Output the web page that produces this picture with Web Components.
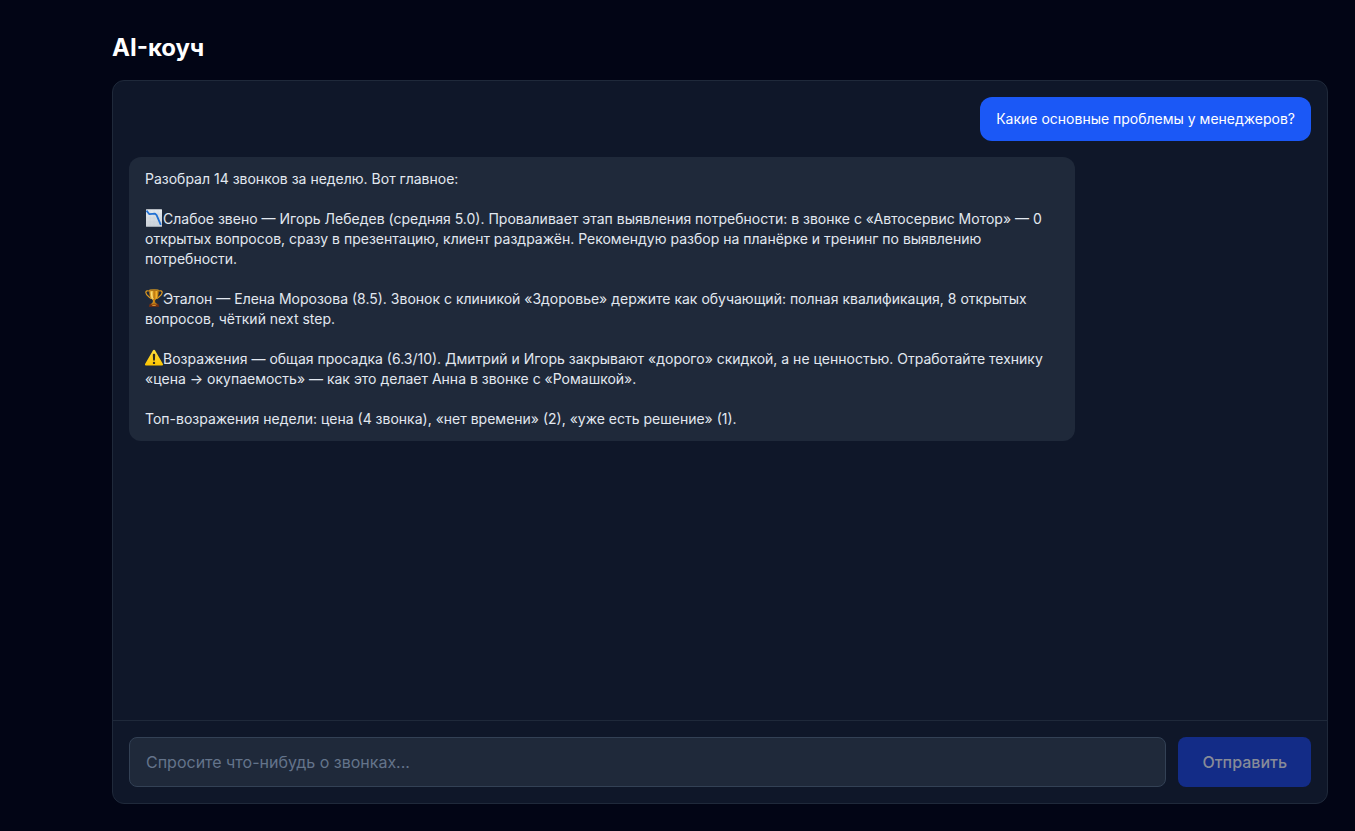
<!DOCTYPE html>
<html lang="ru">
<head>
<meta charset="utf-8">
<meta name="viewport" content="width=device-width, initial-scale=1">
<title>AI-коуч</title>
<style>
  body {
    margin: 0;
    background: #020515;
    color: #e2e8f0;
    font-family: Inter, "Noto Sans", sans-serif;
    -webkit-font-smoothing: antialiased;
  }
</style>
</head>
<body>
<coach-page>
  <span slot="title">AI-коуч</span>
  <coach-chat>
    <chat-message from="user">Какие основные проблемы у менеджеров?</chat-message>
    <chat-message from="coach"><p>Разобрал 14 звонков за неделю. Вот главное:</p>
      <p><chat-icon name="chart"></chat-icon>Слабое звено — Игорь Лебедев (средняя 5.0). Проваливает этап выявления потребности: в звонке с «Автосервис Мотор» — 0 открытых вопросов, сразу в презентацию, клиент раздражён. Рекомендую разбор на планёрке и тренинг по выявлению потребности.</p>
      <p><chat-icon name="trophy"></chat-icon>Эталон — Елена Морозова (8.5). Звонок с клиникой «Здоровье» держите как обучающий: полная квалификация, 8 открытых вопросов, чёткий next step.</p>
      <p><chat-icon name="warning"></chat-icon>Возражения — общая просадка (6.3/10). Дмитрий и Игорь закрывают «дорого» скидкой, а не ценностью. Отработайте технику «цена → окупаемость» — как это делает Анна в звонке с «Ромашкой».</p>
      <p>Топ-возражения недели: цена (4 звонка), «нет времени» (2), «уже есть решение» (1).</p></chat-message>
    <chat-composer slot="composer"></chat-composer>
  </coach-chat>
</coach-page>

<script>
const ICONS = {
  chart: `
    <defs>
      <linearGradient id="paper" x1="0" y1="0" x2="0" y2="1">
        <stop offset="0" stop-color="#e4e9ee"/>
        <stop offset="1" stop-color="#cbd1d8"/>
      </linearGradient>
    </defs>
    <rect x="1" y="0.3" width="16" height="17.4" rx="0.5" fill="url(#paper)"/>
    <path d="M1.5 5h15M1.5 9h15M1.5 13h15M5 1v16M9 1v16M13 1v16" stroke="#bcc7d1" stroke-width="0.4" opacity="0.6"/>
    <path d="M1.5 1.6 4.4 5.2 10 4.6 11.6 6.2 15.8 15.8" fill="none" stroke="#2170d2" stroke-width="1.8" stroke-linejoin="round"/>`,
  trophy: `
    <defs>
      <linearGradient id="gold" x1="0" y1="0" x2="1" y2="0">
        <stop offset="0" stop-color="#b8720a"/>
        <stop offset="0.3" stop-color="#ffd65a"/>
        <stop offset="0.5" stop-color="#b96f08"/>
        <stop offset="0.75" stop-color="#f3b32b"/>
        <stop offset="1" stop-color="#9b5905"/>
      </linearGradient>
    </defs>
    <path d="M4.6 2.2C2.7 1.2.8 2 .8 3.6c0 2.7 3 3.8 5.6 6.2M13.4 2.2c1.9-1 3.8-.2 3.8 1.4 0 2.7-3 3.8-5.6 6.2" fill="none" stroke="#dc9820" stroke-width="1.2"/>
    <path d="M4.1 1h9.8c.1 5.1-1.2 8.6-3.7 10.1-.4 1.2 0 2.7.9 3.8H6.9c.9-1.1 1.3-2.6.9-3.8C5.3 9.6 4 6.1 4.1 1z" fill="url(#gold)"/>
    <ellipse cx="9" cy="1.1" rx="4.9" ry="0.9" fill="#e4a82b"/>
    <ellipse cx="9" cy="1.2" rx="3.8" ry="0.4" fill="#7c4307"/>
    <path d="M6.2 3.2c.2 3 .8 5 1.9 6.4" fill="none" stroke="#ffe78a" stroke-width="0.8" stroke-linecap="round"/>
    <path d="M4.8 14.8h8.4l1 3H3.8z" fill="#762f10"/>
    <path d="M6.2 14.4h5.6l.5 1.2H5.7z" fill="#c17a13"/>
    <path d="M7.3 16h3.4v.9H7.3z" fill="#e1a032"/>`,
  warning: `
    <defs>
      <linearGradient id="sign" x1="0" y1="0" x2="0" y2="1">
        <stop offset="0" stop-color="#ffdf3f"/>
        <stop offset="1" stop-color="#fbc400"/>
      </linearGradient>
    </defs>
    <path d="M7.9 1.5c.5-.9 1.7-.9 2.2 0l7.7 13.2c.5.9 0 1.8-1 1.8H1.2c-1 0-1.5-.9-1-1.8z" fill="url(#sign)"/>
    <path d="M7.8 5.8c0-.7.5-1.1 1.2-1.1s1.2.4 1.2 1.1l-.3 5.2c0 .5-.4.8-.9.8s-.9-.3-.9-.8z" fill="#322b20"/>
    <circle cx="9" cy="13.9" r="1.2" fill="#322b20"/>`
};

class ChatIcon extends HTMLElement {
  constructor() {
    super();
    this.attachShadow({ mode: 'open' });
  }

  connectedCallback() {
    // 18px box hanging 3px below the baseline fills a 20px line without growing it
    this.shadowRoot.innerHTML = `
      <style>
        :host { display: inline-block; width: 18px; height: 18px; vertical-align: -3px; }
        svg { display: block; width: 100%; height: 100%; }
      </style>
      <svg viewBox="0 0 18 18" aria-hidden="true">${ICONS[this.getAttribute('name')] || ''}</svg>
    `;
  }
}

class ChatMessage extends HTMLElement {
  constructor() {
    super();
    this.attachShadow({ mode: 'open' }).innerHTML = `
      <style>
        :host {
          display: block;
          box-sizing: border-box;
          max-width: 80%;
          padding: 12px 16px;
          border-radius: 12px;
          font-size: 14px;
          line-height: 20px;
        }
        :host([from="user"]) { align-self: flex-end; background: #1b58f6; color: #fff; }
        :host([from="coach"]) { align-self: flex-start; background: #1f293a; color: #e2e8f0; }
        ::slotted(p) { margin: 0 0 20px; }
        ::slotted(p:last-child) { margin-bottom: 0; }
      </style>
      <slot></slot>
    `;
  }
}

class ChatComposer extends HTMLElement {
  constructor() {
    super();
    this.attachShadow({ mode: 'open' }).innerHTML = `
      <style>
        :host { display: block; padding: 16px; border-top: 1px solid #1f293a; }
        form { display: flex; gap: 12px; margin: 0; }
        input, button {
          box-sizing: border-box;
          margin: 0;
          border-radius: 8px;
          font-family: inherit;
          font-size: 16px;
          line-height: 24px;
        }
        input {
          flex: 1;
          min-width: 0;
          padding: 12px 16px;
          border: 1px solid #334155;
          background: #1f293a;
          color: #fff;
          outline: none;
        }
        input::placeholder { color: #64748b; opacity: 1; }
        input:focus { border-color: #1b58f6; }
        button {
          padding: 12px 24px;
          border: 0;
          background: #1b58f6;
          color: #fff;
          font-weight: 500;
          cursor: pointer;
        }
        button:disabled { background: #132c87; color: #878b98; cursor: default; }
      </style>
      <form>
        <input type="text" aria-label="Вопрос о звонках" placeholder="Спросите что-нибудь о звонках..." autocomplete="off">
        <button type="submit" disabled>Отправить</button>
      </form>
    `;
  }

  connectedCallback() {
    const form = this.shadowRoot.querySelector('form');
    const input = this.shadowRoot.querySelector('input');
    const button = this.shadowRoot.querySelector('button');

    input.addEventListener('input', () => {
      button.disabled = !input.value.trim();
    });

    form.addEventListener('submit', e => {
      e.preventDefault();
      const text = input.value.trim();
      if (!text) return;
      const message = document.createElement('chat-message');
      message.setAttribute('from', 'user');
      message.textContent = text;
      this.parentElement.append(message);
      input.value = '';
      button.disabled = true;
    });
  }
}

class CoachChat extends HTMLElement {
  constructor() {
    super();
    this.attachShadow({ mode: 'open' }).innerHTML = `
      <style>
        :host {
          display: flex;
          flex-direction: column;
          min-height: 0;
          overflow: hidden;
          border: 1px solid #1f293a;
          border-radius: 12px;
          background: #0f1729;
        }
        .messages {
          flex: 1;
          min-height: 0;
          display: flex;
          flex-direction: column;
          gap: 16px;
          padding: 16px;
          overflow-y: auto;
        }
      </style>
      <div class="messages"><slot></slot></div>
      <slot name="composer"></slot>
    `;
  }
}

class CoachPage extends HTMLElement {
  constructor() {
    super();
    this.attachShadow({ mode: 'open' }).innerHTML = `
      <style>
        :host {
          display: flex;
          flex-direction: column;
          gap: 16px;
          box-sizing: border-box;
          height: 100vh;
          padding: 32px 27px 27px 112px;
        }
        h1 { margin: 0; color: #fff; font-size: 24px; line-height: 32px; font-weight: 700; }
        ::slotted(coach-chat) { flex: 1; }
      </style>
      <h1><slot name="title"></slot></h1>
      <slot></slot>
    `;
  }
}

customElements.define('chat-icon', ChatIcon);
customElements.define('chat-message', ChatMessage);
customElements.define('chat-composer', ChatComposer);
customElements.define('coach-chat', CoachChat);
customElements.define('coach-page', CoachPage);
</script>
</body>
</html>
